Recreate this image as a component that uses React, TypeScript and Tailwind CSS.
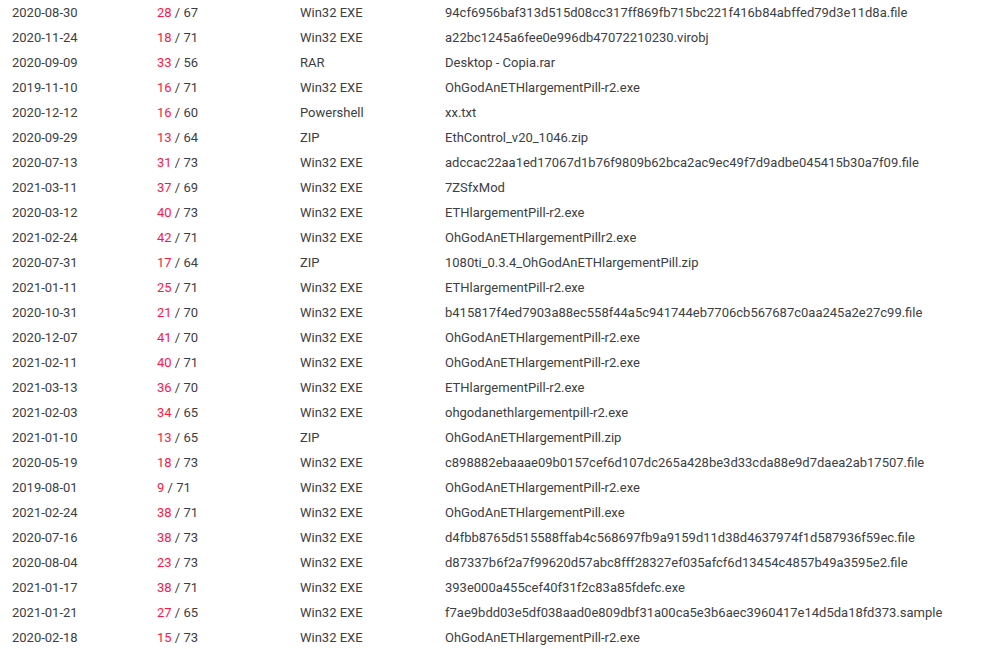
const rows: [string, number, number, string, string][] = [
  ["2020-08-30", 28, 67, "Win32 EXE", "94cf6956baf313d515d08cc317ff869fb715bc221f416b84abffed79d3e11d8a.file"],
  ["2020-11-24", 18, 71, "Win32 EXE", "a22bc1245a6fee0e996db47072210230.virobj"],
  ["2020-09-09", 33, 56, "RAR", "Desktop - Copia.rar"],
  ["2019-11-10", 16, 71, "Win32 EXE", "OhGodAnETHlargementPill-r2.exe"],
  ["2020-12-12", 16, 60, "Powershell", "xx.txt"],
  ["2020-09-29", 13, 64, "ZIP", "EthControl_v20_1046.zip"],
  ["2020-07-13", 31, 73, "Win32 EXE", "adccac22aa1ed17067d1b76f9809b62bca2ac9ec49f7d9adbe045415b30a7f09.file"],
  ["2021-03-11", 37, 69, "Win32 EXE", "7ZSfxMod"],
  ["2020-03-12", 40, 73, "Win32 EXE", "ETHlargementPill-r2.exe"],
  ["2021-02-24", 42, 71, "Win32 EXE", "OhGodAnETHlargementPillr2.exe"],
  ["2020-07-31", 17, 64, "ZIP", "1080ti_0.3.4_OhGodAnETHlargementPill.zip"],
  ["2021-01-11", 25, 71, "Win32 EXE", "ETHlargementPill-r2.exe"],
  ["2020-10-31", 21, 70, "Win32 EXE", "b415817f4ed7903a88ec558f44a5c941744eb7706cb567687c0aa245a2e27c99.file"],
  ["2020-12-07", 41, 70, "Win32 EXE", "OhGodAnETHlargementPill-r2.exe"],
  ["2021-02-11", 40, 71, "Win32 EXE", "OhGodAnETHlargementPill-r2.exe"],
  ["2021-03-13", 36, 70, "Win32 EXE", "ETHlargementPill-r2.exe"],
  ["2021-02-03", 34, 65, "Win32 EXE", "ohgodanethlargementpill-r2.exe"],
  ["2021-01-10", 13, 65, "ZIP", "OhGodAnETHlargementPill.zip"],
  ["2020-05-19", 18, 73, "Win32 EXE", "c898882ebaaae09b0157cef6d107dc265a428be3d33cda88e9d7daea2ab17507.file"],
  ["2019-08-01", 9, 71, "Win32 EXE", "OhGodAnETHlargementPill-r2.exe"],
  ["2021-02-24", 38, 71, "Win32 EXE", "OhGodAnETHlargementPill.exe"],
  ["2020-07-16", 38, 73, "Win32 EXE", "d4fbb8765d515588ffab4c568697fb9a9159d11d38d4637974f1d587936f59ec.file"],
  ["2020-08-04", 23, 73, "Win32 EXE", "d87337b6f2a7f99620d57abc8fff28327ef035afcf6d13454c4857b49a3595e2.file"],
  ["2021-01-17", 38, 71, "Win32 EXE", "393e000a455cef40f31f2c83a85fdefc.exe"],
  ["2021-01-21", 27, 65, "Win32 EXE", "f7ae9bdd03e5df038aad0e809dbf31a00ca5e3b6aec3960417e14d5da18fd373.sample"],
  ["2020-02-18", 15, 73, "Win32 EXE", "OhGodAnETHlargementPill-r2.exe"],
];

export default function App() {
  return (
    <div
      className="w-[991px] h-[649px] bg-white overflow-hidden text-[13px] text-[#3c4043]"
      style={{ fontFamily: "Roboto, 'Noto Sans', sans-serif" }}
    >
      {rows.map((r, i) => (
        <div key={i} className="flex h-[25px] items-center whitespace-nowrap">
          <div className="w-[145px] pl-[12px]">{r[0]}</div>
          <div className="w-[143px] pl-[12px]">
            <span className="text-[#ff1744]">{r[1]}</span> / {r[2]}
          </div>
          <div className="w-[145px] pl-[12px]">{r[3]}</div>
          <div className="pl-[12px]">{r[4]}</div>
        </div>
      ))}
    </div>
  );
}
